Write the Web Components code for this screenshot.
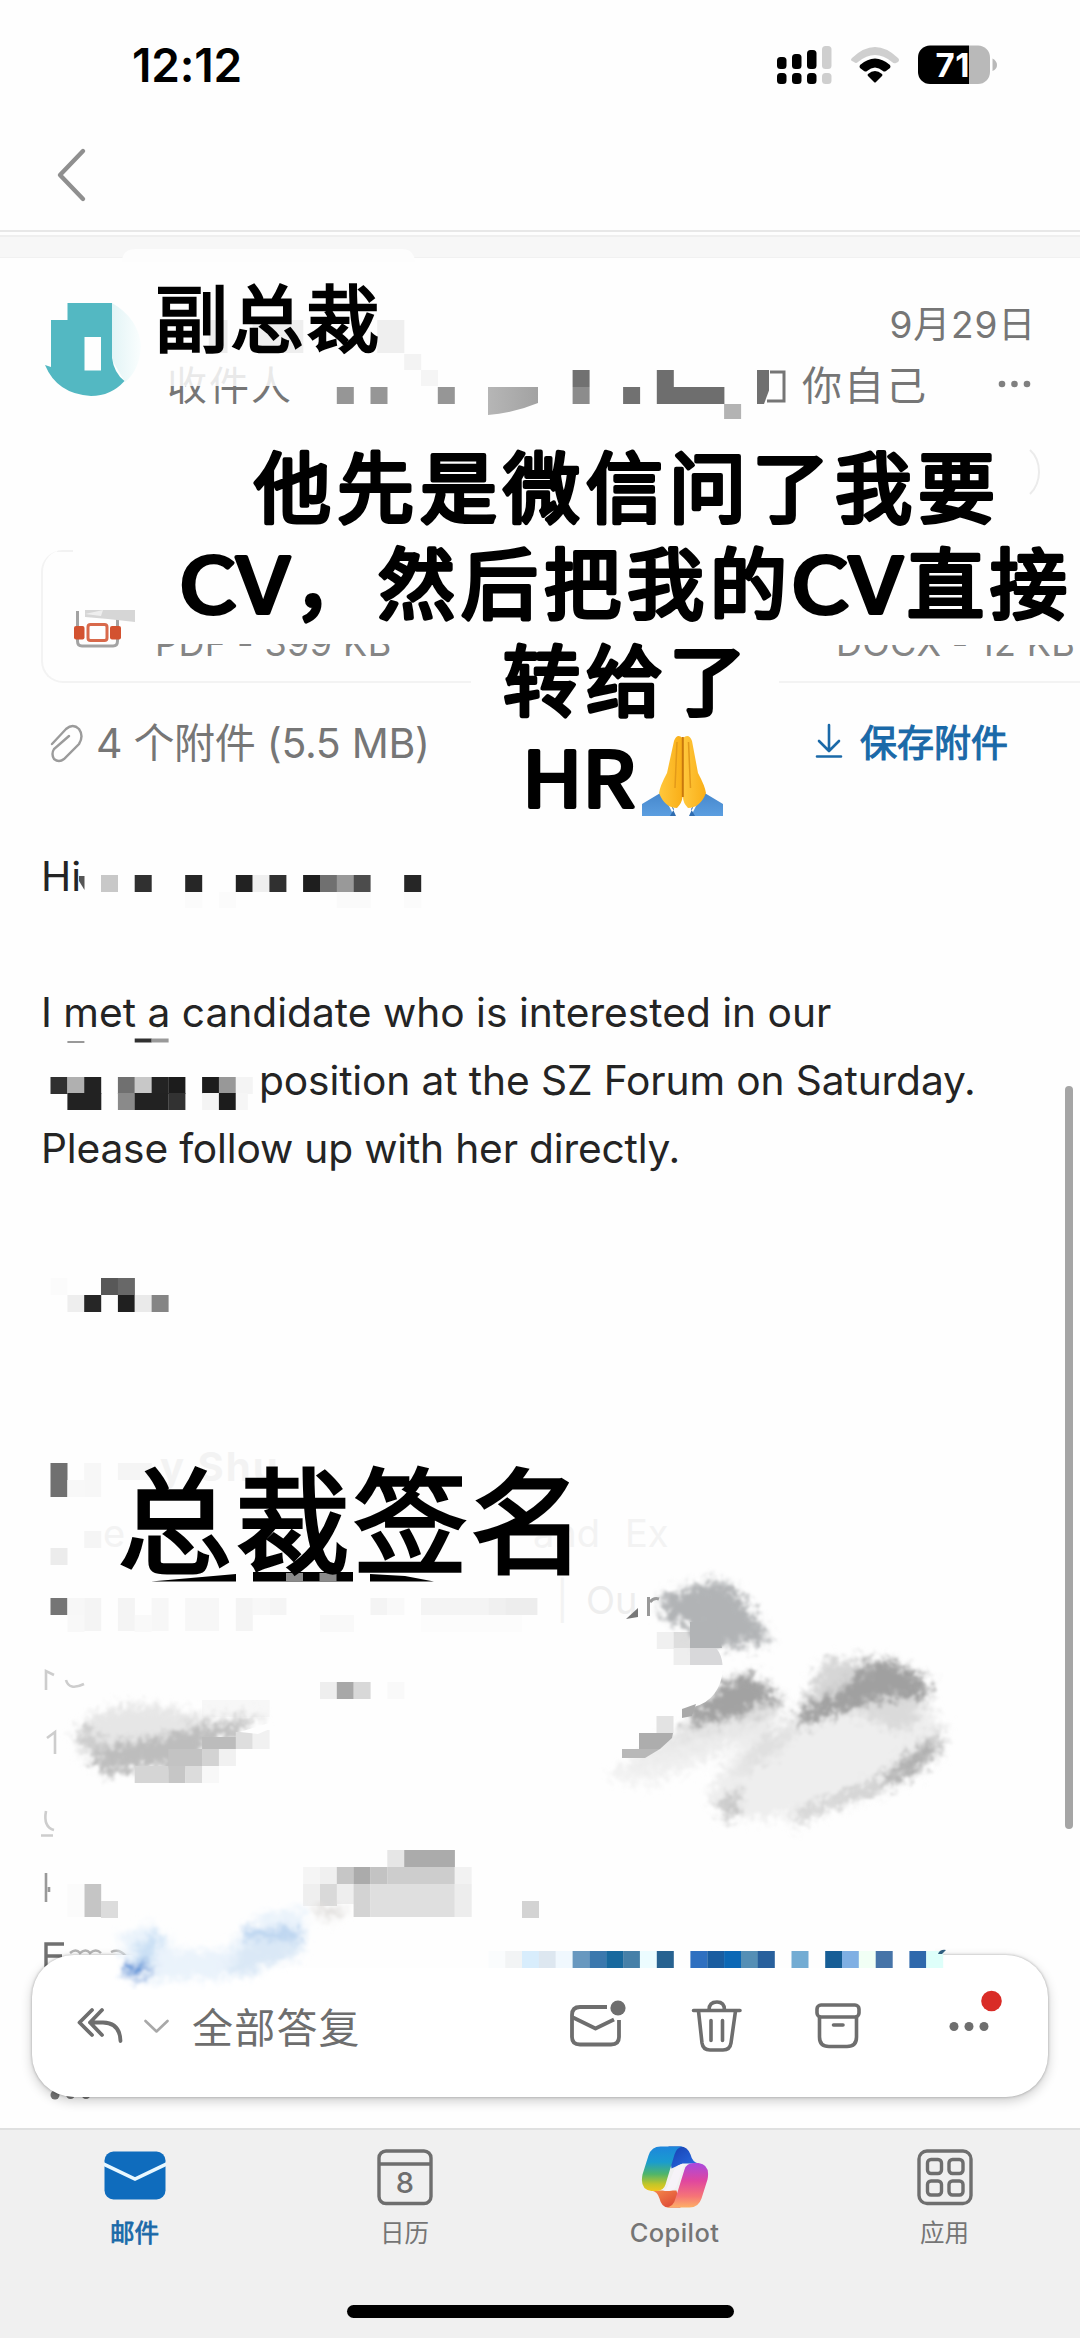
<!DOCTYPE html>
<html lang="zh-CN">
<head>
<meta charset="utf-8">
<title>邮件</title>
<style>
    html, body {
        margin: 0;
        padding: 0;
        background: #fefefe;
    }
</style>
</head>
<body>
<mail-app>
    <status-bar slot="top" time="12:12" battery="71"></status-bar>
    <nav-header slot="top"></nav-header>

    <message-header date="9月29日" to="收件人" self="你自己"></message-header>
    <attachment-strip>
        <attachment-card kind="first" meta="PDF - 399 KB"></attachment-card>
        <attachment-card kind="last" meta="DOCX - 12 KB"></attachment-card>
    </attachment-strip>
    <attachment-summary action="保存附件">4 个附件 (5.5 MB)</attachment-summary>
    <message-body>
        <text-line>Hi</text-line>
        <text-line></text-line>
        <text-line>I met a candidate who is interested in our</text-line>
        <text-line indent="218" spacing="-0.12">position at the SZ Forum on Saturday.</text-line>
        <text-line spacing="-0.18">Please follow up with her directly.</text-line>
    </message-body>

    <redaction-layer slot="over"></redaction-layer>
    <reply-toolbar slot="over" label="全部答复"></reply-toolbar>
    <smudge-strip slot="over"></smudge-strip>
    <sticker-text slot="over"></sticker-text>

    <tab-bar slot="bottom">
        <tab-item icon="mail" label="邮件" active></tab-item>
        <tab-item icon="calendar" label="日历"></tab-item>
        <tab-item icon="copilot" label="Copilot"></tab-item>
        <tab-item icon="apps" label="应用"></tab-item>
    </tab-bar>
</mail-app>

<script>
// Small base class: attaches an open shadow root and fills it from render()
class BaseElement extends HTMLElement {
    constructor() {
        super();
        this.attachShadow({ mode: 'open' });
    }

    connectedCallback() {
        const template = document.createElement('template');
        template.innerHTML = this.render();
        this.shadowRoot.replaceChildren(template.content.cloneNode(true));
    }

    attr(name, fallback = '') {
        return this.getAttribute(name) || fallback;
    }
}

class MailApp extends BaseElement {
    render() {
        return `
            <style>
                :host {
                    position: relative;
                    display: flex;
                    flex-direction: column;
                    width: 1080px;
                    height: 2338px;
                    overflow: hidden;
                    background: #fefefe;
                    color: #242424;
                    font-family: Inter, "Noto Sans CJK SC", sans-serif;
                }
                main {
                    flex: 1;
                    min-height: 0;
                    overflow: hidden;
                }
            </style>
            <slot name="top"></slot>
            <main><slot></slot></main>
            <slot name="bottom"></slot>
            <slot name="over"></slot>
        `;
    }
}
customElements.define('mail-app', MailApp);

class StatusBar extends BaseElement {
    render() {
        return `
            <style>
                :host {
                    display: flex;
                    justify-content: space-between;
                    align-items: center;
                    box-sizing: border-box;
                    height: 130px;
                    padding: 0 82px 1px 132px;
                    color: #000;
                }
                .time {
                    font-size: 46px;
                    font-weight: 600;
                    letter-spacing: -0.2px;
                }
                svg { display: block; }
            </style>
            <span class="time">${this.attr('time')}</span>
            <svg width="222" height="40" viewBox="777 44 222 40">
                <g>
                    <rect x="778" y="56" width="9.5" height="12" rx="3.5"/>
                    <rect x="793" y="53" width="9.5" height="15" rx="3.5"/>
                    <rect x="808" y="49" width="9.5" height="19" rx="3.5"/>
                    <rect x="823" y="45" width="9.5" height="23" rx="3.5" fill="#cfcfcf"/>
                    <rect x="778" y="72" width="9.5" height="11" rx="3.5"/>
                    <rect x="793" y="72" width="9.5" height="11" rx="3.5"/>
                    <rect x="808" y="72" width="9.5" height="11" rx="3.5"/>
                    <rect x="823" y="72" width="9.5" height="11" rx="3.5" fill="#cfcfcf"/>
                </g>
                <path fill="#cfcfcf" d="M853 57 Q876 35 899 57 Q901 59 899 61 L897 62 Q895 63 893 61 Q876 47 859 61 Q857 63 855 61 L853 60 Q851 59 853 57Z"/>
                <path d="M861 64 Q876 51 891 64 Q892 66 891 67 L887 70 Q885 71 884 70 Q876 63 868 70 Q867 71 865 70 L861 67 Q860 66 861 64Z"/>
                <path d="M869 73 Q876 67 883 73 Q884 74 883 75 L877 81 Q876 82 875 81 L869 75 Q868 74 869 73Z"/>
                <clipPath id="shell"><rect x="919" y="44.500" width="72" height="38.500" rx="12"/></clipPath>
                <g clip-path="url(#shell)">
                    <rect x="919" y="44" width="51" height="40"/>
                    <rect x="970" y="44" width="22" height="40" fill="#b9b9b9"/>
                </g>
                <path fill="#b9b9b9" d="M993.500 57.500 Q998 60 998 64 Q998 68 993.500 70Z"/>
                <text x="936.500" y="76" fill="#fff" font-family="Inter, sans-serif" font-size="33" font-weight="700" textLength="34">${this.attr('battery')}</text>
            </svg>
        `;
    }
}
customElements.define('status-bar', StatusBar);

class NavHeader extends BaseElement {
    render() {
        return `
            <style>
                :host { display: block; }
                nav {
                    display: flex;
                    align-items: center;
                    height: 100px;
                    padding-left: 55px;
                    border-bottom: 2px solid #e8e8e8;
                }
                svg { display: block; margin-top: -11px; }
                .band {
                    height: 20px;
                    margin-top: 3px;
                    border-top: 2px solid #efefef;
                    border-bottom: 1px solid #f1f1f1;
                    background: #f7f7f7;
                }
            </style>
            <nav>
                <svg width="34" height="56" viewBox="0 0 34 56" fill="none" stroke="#8f8f8f" stroke-width="4.400" stroke-linecap="round" stroke-linejoin="round">
                    <path d="M28 4 L5 28 L28 52"/>
                </svg>
            </nav>
            <div class="band"></div>
        `;
    }
}
customElements.define('nav-header', NavHeader);

class MessageHeader extends BaseElement {
    render() {
        return `
            <style>
                :host {
                    display: grid;
                    grid-template-columns: 105px 1fr auto 106px;
                    grid-template-rows: 61px 61px;
                    align-items: center;
                    box-sizing: border-box;
                    height: 292px;
                    padding: 33px 44px 137px 20px;
                    align-content: start;
                    color: #767676;
                    font-size: 40px;
                }
                .avatar { grid-row: 1 / 3; margin: -5px 0 0 22px; }
                .date {
                    grid-column: 3 / 5;
                    justify-self: end;
                    font-size: 37px;
                    letter-spacing: 0.8px;
                }
                .to { grid-column: 2; padding-left: 42px; letter-spacing: 2px; }
                .self { letter-spacing: 2px; padding-right: 2px; }
                .more { justify-self: end; display: block; margin-right: 4px; }
            </style>
            <svg class="avatar" width="105" height="100" viewBox="42 300 105 100">
                <defs>
                    <linearGradient id="fade" x1="0" x2="1">
                        <stop offset="0" stop-color="#e3f4f6"/>
                        <stop offset="1" stop-color="#fafefe"/>
                    </linearGradient>
                </defs>
                <path fill="url(#fade)" d="M112 303 Q138 318 141 345 Q140 370 125 382 L112 360Z"/>
                <path fill="#53b8c2" fill-rule="evenodd" d="M67.500 303 H112 V358 Q114 373 124.500 381 Q111 396 91 396 Q57 394 45 365 L51 367 V320 H67.500Z M84.500 337 V370.500 H101 V337Z"/>
            </svg>
            <span class="date">${this.attr('date')}</span>
            <span class="to">${this.attr('to')}</span>
            <span class="self">${this.attr('self')}</span>
            <svg class="more" width="34" height="10" viewBox="0 0 34 10" fill="#808080">
                <circle cx="4" cy="6" r="3.300"/><circle cx="16.500" cy="6" r="3.300"/><circle cx="29" cy="6" r="3.300"/>
            </svg>
        `;
    }
}
customElements.define('message-header', MessageHeader);

class AttachmentStrip extends BaseElement {
    render() {
        return `
            <style>
                :host {
                    display: flex;
                    gap: 308px;
                    height: 133px;
                    padding-left: 41px;
                    overflow: hidden;
                }
            </style>
            <slot></slot>
        `;
    }
}
customElements.define('attachment-strip', AttachmentStrip);

class AttachmentCard extends BaseElement {
    render() {
        const first = this.attr('kind') === 'first';
        return `
            <style>
                :host {
                    flex: none;
                    display: flex;
                    align-items: flex-end;
                    box-sizing: border-box;
                    width: ${first ? 430 : 320}px;
                    height: 133px;
                    border-bottom: 2px solid #f3f3f3;
                    ${first ? 'border-left: 2px solid #f3f3f3; border-radius: 22px 0 0 22px;' : ''}
                    background: linear-gradient(#f2f2f2, #f2f2f2) 14px 0 / ${first ? 16 : 0}px 2px no-repeat;
                    padding: 0 0 18px ${first ? 27 : 57}px;
                    color: #858585;
                    font-size: 36px;
                    line-height: 40px;
                }
                svg { flex: none; margin: 0 17px 13px 0; }
                .meta {
                    white-space: nowrap;
                    clip-path: inset(${first ? '21px' : '22px'} -10px 0 -10px);
                    letter-spacing: ${first ? '0.4px' : '0.3px'};
                }
            </style>
            ${first ? `
            <svg width="68" height="42" viewBox="70 604 68 42" fill="none">
                <path d="M77.500 607 V637 Q77.500 642 82 642 H113 Q117.500 642 117.500 637 V612" stroke="#a3a3a3" stroke-width="3"/>
                <rect x="74" y="622" width="10.500" height="13.500" rx="2" fill="#d35230"/>
                <rect x="110" y="622" width="11" height="13.500" rx="2" fill="#d35230"/>
                <rect x="85" y="617" width="24" height="22" fill="#fefefe"/>
                <rect x="88" y="620.500" width="19" height="16" rx="2.500" stroke="#d8694b" stroke-width="3"/>
                <path d="M85 606 H135 V618 L108 615 L85 613Z" fill="#d6d6d6"/>
                <path d="M85 610 L103 606 L101 612Z" fill="#eee"/>
            </svg>` : ''}
            <span class="meta">${this.attr('meta')}</span>
        `;
    }
}
customElements.define('attachment-card', AttachmentCard);

class AttachmentSummary extends BaseElement {
    render() {
        return `
            <style>
                :host {
                    display: flex;
                    align-items: center;
                    box-sizing: border-box;
                    height: 120px;
                    padding: 0 72px 0 48px;
                    color: #767676;
                    font-size: 41px;
                }
                .count { margin: -6px 0 0 12px; letter-spacing: -0.3px; }
                .save {
                    display: flex;
                    align-items: center;
                    gap: 17px;
                    margin: -4px 0 0 auto;
                    color: #1a69a8;
                    font-size: 37px;
                    -webkit-text-stroke: 1.1px #1a69a8;
                }
            </style>
            <svg width="36" height="42" viewBox="48 721 36 42" fill="none" stroke="#9b9b9b" stroke-width="2.400" stroke-linecap="round">
                <path d="M52 743 L66 728 Q73 722 79 728 Q84 735 79 743 L64 758 Q59 762 54 758 Q51 753 54 748 L69 735"/>
            </svg>
            <span class="count"><slot></slot></span>
            <span class="save">
                <svg width="28" height="36" viewBox="0 0 28 36" fill="none" stroke="#1a69a8" stroke-width="2.600" stroke-linecap="round" stroke-linejoin="round">
                    <path d="M14 2 V27 M4 18 L14 28 L24 18 M2 33.500 H26"/>
                </svg>
                ${this.attr('action')}
            </span>
        `;
    }
}
customElements.define('attachment-summary', AttachmentSummary);

class MessageBody extends BaseElement {
    render() {
        return `
            <style>
                :host {
                    display: flex;
                    flex-direction: column;
                    padding: 40px 42px 0 41px;
                    font-size: 40.7px;
                    color: #242424;
                }
            </style>
            <slot></slot>
        `;
    }
}
customElements.define('message-body', MessageBody);

class TextLine extends BaseElement {
    render() {
        return `
            <style>
                :host {
                    display: block;
                    height: 68px;
                    line-height: 68px;
                    white-space: nowrap;
                    padding-left: ${this.attr('indent', '0')}px;
                    letter-spacing: ${this.attr('spacing', '0')}px;
                }
            </style>
            <slot></slot>
        `;
    }
}
customElements.define('text-line', TextLine);

// Mosaic blocks sit on a 16.84px column grid: [column, y, colour, columns, height]
const CELL = 16.84;
const BLOCKS = [
    [12.4, 320, '#ececec', 1.1, 33], [15, 320, '#eeeeee', 3, 33],
    [22.4, 320, '#efefef', 1.6, 33], [24, 354, '#f3f3f3', 1, 16], [25, 370, '#f5f5f5', 1, 16],
    [20, 387, '#969696'], [22, 387, '#969696'], [26, 387, '#969696'],
    [34, 370, '#717171'], [34, 387, '#8c8c8c'], [37, 387, '#717171'],
    [39, 370, '#6e6e6e'], [39, 387, '#6e6e6e', 4], [43, 404, '#b3b3b3', 1, 15],

    [6, 875, '#c8c8c8'], [8, 875, '#303030'], [11, 875, '#262626'], [14, 875, '#222222'],
    [15, 875, '#efefef'], [16, 875, '#303030'], [18, 875, '#1e1e1e'], [19, 875, '#707070'],
    [20, 875, '#999999'], [21, 875, '#4c4c4c'], [24, 875, '#262626'],
    [11, 892, '#fbfbfb', 1, 16], [13, 892, '#fbfbfb', 1, 16], [20, 892, '#fafafa', 2, 16], [24, 892, '#fbfbfb', 1, 16],

    [4, 1041, '#999999', 1, 2], [8, 1038.5, '#303030', 1, 4], [9, 1038.5, '#999999', 1, 4],
    [3, 1077, '#303030'], [4, 1077, '#b0b0b0'], [5, 1077, '#222222'], [4, 1093, '#222222', 2],
    [7, 1077, '#707070'], [8, 1077, '#c8c8c8'], [9, 1077, '#232323'], [10, 1077, '#1c1c1c'],
    [7, 1093, '#8a8a8a'], [8, 1093, '#222222', 2], [10, 1093, '#323232'],
    [12, 1077, '#1c1c1c'], [13, 1077, '#989898'], [14, 1077, '#f4f4f4'],
    [12, 1093, '#f4f4f4'], [13, 1093, '#1c1c1c'], [14, 1093, '#f6f6f6', 0.7],

    [6, 1278, '#585858'], [7, 1278, '#686868'], [3, 1278, '#fbfbfb'],
    [4, 1295, '#eeeeee'], [5, 1295, '#262626'], [7, 1295, '#202020'], [8, 1295, '#eaeaea'], [9, 1295, '#858585'],

    [3, 1463, '#707070', 1, 34], [5, 1463, '#f7f7f7', 1, 34], [4, 1480, '#f8f8f8'], [7, 1463, '#f5f5f5', 2],
    [5, 1531, '#f5f5f5'], [3, 1548, '#ececec'], [3, 1598, '#757575'],
    [4, 1598, '#f7f7f7'], [4, 1615, '#f8f8f8'], [5, 1598, '#f4f4f4', 1, 33], [7, 1598, '#f4f4f4', 1, 33],
    [8, 1615, '#f9f9f9', 1], [9, 1598, '#f7f7f7', 1, 33],
    [11, 1598, '#f7f7f7', 2, 33], [14, 1598, '#f4f4f4', 1, 33], [15, 1598, '#f8f8f8'], [16, 1598, '#f5f5f5'],
    [19, 1615, '#f9f9f9', 2], [22, 1598, '#f4f4f4'], [23, 1598, '#f9f9f9'],
    [25, 1598, '#f4f4f4', 4], [29, 1598, '#f0f0f0'], [30, 1598, '#ededed', 1.9], [25, 1615, '#fcfcfc', 6],

    [19, 1682, '#eeeeee'], [20, 1682, '#a8a8a8'], [21, 1682, '#d8d8d8'], [23, 1682, '#f9f9f9'],
    [5, 1884, '#c5c5c5', 1, 33], [6, 1901, '#dcdcdc'], [4, 1884, '#fbfbfb', 1, 33],
    [23, 1850, '#e6e6e6'], [24, 1850, '#ababab', 3],
    [18, 1867, '#f5f5f5'], [19, 1867, '#f0f0f0'], [20, 1867, '#c6c6c6'], [21, 1867, '#ababab'],
    [22, 1867, '#c3c3c3'], [23, 1867, '#cdcdcd', 4], [27, 1867, '#f2f2f2'],
    [18, 1884, '#efefef', 1, 22], [19, 1884, '#d9d9d9', 1, 22], [20, 1884, '#eeeeee', 1, 20],
    [21, 1884, '#d3d3d3', 1, 33], [22, 1884, '#dfdfdf', 5, 33], [27, 1884, '#ededed', 1, 33],
    [31, 1901, '#d3d3d3'],

    [39, 1632, '#f0f0f0'], [40, 1632, '#dedede'], [40, 1648, '#eeeeee'],
    [12, 1700, '#f7f7f7', 4]
];

// Stepped lower edge of the first smudge
const STEPS = [
    [12, 1737, '#bcbcbc', 2, 12], [14, 1732, '#dedede', 1, 17], [15, 1730, '#f1f1f1', 1, 19],
    [10, 1749, '#c3c3c3', 2], [12, 1749, '#d3d3d3'], [13, 1749, '#f1f1f1'],
    [8, 1766, '#d5d5d5', 2], [10, 1766, '#c6c6c6'], [11, 1766, '#dcdcdc'], [12, 1766, '#f8f8f8']
];

function drawBlocks(blocks) {
    return blocks.map(([col, y, fill, cols = 1, h = 17]) =>
        `<rect x="${(col * CELL).toFixed(1)}" y="${y}" width="${(cols * CELL + 0.2).toFixed(1)}" height="${h}" fill="${fill}"/>`
    ).join('');
}

class RedactionLayer extends BaseElement {
    render() {
        return `
            <style>
                :host {
                    position: absolute;
                    left: 0;
                    top: 0;
                    width: 1080px;
                    height: 2128px;
                }
                svg { display: block; }
                text { font-family: Inter, "Noto Sans CJK SC", sans-serif; }
            </style>
            <svg width="1080" height="2128" viewBox="0 0 1080 2128">
                <defs>
                    <filter id="rough" x="-10%" y="-20%" width="120%" height="140%">
                        <feGaussianBlur in="SourceGraphic" stdDeviation="4" result="soft"/>
                        <feTurbulence type="fractalNoise" baseFrequency="0.13" numOctaves="3" seed="6" result="noise"/>
                        <feDisplacementMap in="soft" in2="noise" scale="24" xChannelSelector="R" yChannelSelector="G"/>
                        <feGaussianBlur stdDeviation="1"/>
                    </filter>
                    <linearGradient id="haze" x1="0.300" y1="0.200" x2="0.600" y2="1">
                        <stop offset="0" stop-color="#c8c8c8"/>
                        <stop offset="0.400" stop-color="#e8e8e8"/>
                        <stop offset="1" stop-color="#fdfdfd"/>
                    </linearGradient>
                    <linearGradient id="chip" x1="0" x2="1">
                        <stop offset="0" stop-color="#b6b6b6"/>
                        <stop offset="1" stop-color="#a2a2a2"/>
                    </linearGradient>
                </defs>

                <!-- erased parts of the header -->
                <path d="M122 262 Q122 249 136 249 H402 Q414 249 415 262Z" fill="#fdfdfd"/>
                <rect x="155" y="352" width="300" height="34" fill="#fefefe" fill-opacity="0.850"/>
                <path d="M488 387 H538 V403 Q514 413 488 415Z" fill="url(#chip)"/>
                <rect x="757" y="370" width="12" height="34" fill="#707070"/>
                <path d="M764 404 L771 385 V404Z" fill="#fefefe"/>
                <path d="M770 372 H784 V401 H767" fill="none" stroke="#767676" stroke-width="3"/>
                <path d="M1030 450 Q1039 458 1039 472 Q1039 485 1030 494" fill="none" stroke="#ebebeb" stroke-width="2"/>
                <path d="M79 876 H84.500 V890 L79 881Z" fill="#555"/>

                <!-- what is left of the signature text -->
                <g fill="#f3f3f3" font-size="38">
                    <text x="160" y="1481" font-weight="700" font-size="40" letter-spacing="2">y Shu</text>
                    <text x="103" y="1547">e</text>
                    <text x="533" y="1547">and</text>
                    <text x="625" y="1547">Ex</text>
                    <text x="556" y="1614">|</text>
                    <text x="586" y="1614" fill="#eeeeee">Ou</text>
                </g>
                <path d="M648.500 1597 V1616 M650 1602 Q654 1597 659 1599" stroke="#999" stroke-width="3" fill="none"/>
                <path d="M626 1619 L638 1608 V1617Z" fill="#777"/>
                <g fill="none" stroke="#cdcdcd" stroke-width="2.600">
                    <path d="M46 1690 V1671 L54 1675 M66 1680 Q69 1691 84 1684"/>
                    <path d="M47 1738 L55 1732 V1754"/>
                    <path d="M46 1811 Q43 1827 54 1830 M41 1835.500 H53"/>
                    <path d="M46 1873 V1902 M49 1887 V1892" stroke="#999"/>
                </g>
                <path d="M46 1972 V1944 H64 M46 1956 H62" fill="none" stroke="#707070" stroke-width="3.400"/>
                <path d="M70 1953 Q76 1948 80 1953 Q86 1948 90 1953 Q96 1948 101 1953 M111 1952 Q119 1948 126 1956" fill="none" stroke="#b5b5b5" stroke-width="2.400"/>

                ${drawBlocks(BLOCKS)}

                <!-- bottom edge under the signature sticker -->
                <path d="M151 1581.500 L236 1574 V1581.500Z M370 1574 L405 1576 L434 1581.500 H370Z"/>
                <path d="M253 1572 H353 V1581.500 H253Z"/>
                <path d="M286 1573 H303 V1581.500 H286Z M319.500 1573 H336.500 V1581.500 H319.500Z" fill="#8a8a8a"/>

                <!-- brush smudges -->
                <g filter="url(#rough)">
                    <path fill="#e6e6e6" d="M74 1730 Q96 1706 140 1704 Q176 1708 200 1716 L266 1716 L225 1740 L110 1762 L82 1758Z"/>
                    <path fill="#bdbdbd" d="M92 1745 Q150 1740 190 1728 L232 1722 L262 1716 L240 1732 L205 1744 L202 1766 L140 1768 L104 1774 L92 1758Z"/>
                    <path fill="#cbcbcb" d="M76 1728 L90 1726 L104 1748 L92 1758Z"/>
                    <path fill="#b1b3b5" d="M660 1597 L690 1588 L718 1579 L738 1592 L772 1640 L728 1648 L698 1648 L692 1628 L664 1618Z"/>
                    <path fill="url(#haze)" d="M674 1732 L720 1700 L772 1690 L786 1708 L760 1734 L705 1762 L650 1788 L608 1776Z"/>
                    <path fill="#a2a2a2" d="M722 1682 L752 1673 L784 1702 L760 1704 L740 1716 L688 1726 L690 1712Z"/>
                    <path fill="#eeeeee" d="M788 1718 L850 1700 L930 1690 L940 1740 L914 1770 L800 1817 L720 1820 L708 1788 L742 1742Z"/>
                    <path fill="#d6d6d6" d="M796 1714 L824 1660 L890 1658 L850 1698Z"/>
                    <path fill="#a0a0a0" d="M840 1690 L868 1664 L892 1660 L930 1682 L924 1702 L890 1698 L850 1710 L796 1728 L796 1714Z"/>
                    <path fill="#dadada" d="M850 1712 L890 1700 L924 1706 L906 1734 L872 1720Z"/>
                    <path fill="#e0e0e0" d="M760 1736 L800 1724 L780 1752 L730 1780Z"/>
                    <path fill="#cecece" d="M946 1726 L938 1758 L900 1784 L806 1818 L796 1830 L796 1812 L876 1780 L914 1746Z"/>
                    <path fill="#a8a8a8" d="M936 1740 L926 1762 L878 1788 L890 1772Z"/>
                    <path fill="#c4c4c4" d="M714 1806 L742 1788 L740 1802 L732 1818Z"/>
                </g>
                ${drawBlocks(STEPS)}
                <path fill="#fefefe" d="M240 1732 L272 1722 V1728 L258 1734Z"/>
                <path fill="#b1b3b5" d="M690 1622 H716 L722 1648 H690Z"/>
                <path fill="#fefefe" d="M656 1666 H722 V1676 Q716 1704 688 1708 H682 V1716 H656Z"/>
                <path fill="#e3e3e3" d="M656.500 1716 H673.500 V1733 H656.500Z"/>
                <path fill="#a9a9a9" d="M682 1709 L696 1704 L692 1716 L682 1718Z"/>
                <path fill="#adadad" d="M639 1733 H673 L672 1738 L660 1749 H639Z"/>
                <path fill="#b8b8b8" d="M622 1749 H660 L645 1758 H622Z"/>
                <path fill="#d8d8da" d="M690 1648 H716 Q722 1655 722.500 1665 H690Z"/>

                <g fill="#777"><circle cx="55" cy="2095" r="4.500"/><circle cx="70.500" cy="2094.500" r="4.500"/><circle cx="86" cy="2094.500" r="4.500"/></g>

                <rect x="1065" y="1086" width="8" height="743" rx="4" fill="#a5a5a5"/>
            </svg>
        `;
    }
}
customElements.define('redaction-layer', RedactionLayer);

class ReplyToolbar extends BaseElement {
    render() {
        return `
            <style>
                :host {
                    position: absolute;
                    left: 32px;
                    top: 1955px;
                    width: 1016px;
                    height: 142px;
                    box-sizing: border-box;
                    display: flex;
                    align-items: center;
                    padding: 0 44px 0 45px;
                    border-radius: 42px;
                    background: #fff;
                    box-shadow: 0 0 3px rgba(0, 0, 0, 0.3), 0 4px 12px rgba(0, 0, 0, 0.2);
                    color: #6e6e6e;
                    font-size: 41px;
                }
                svg { display: block; flex: none; }
                .arrow { margin-left: 19px; }
                .label { margin: -3px 0 0 23px; letter-spacing: 1.2px; }
                .actions {
                    display: flex;
                    align-items: center;
                    margin-left: auto;
                }
                .trash { margin-left: 64px; }
                .archive { margin-left: 71px; }
                .more { margin-left: 86px; }
            </style>
            <svg width="48" height="40" viewBox="78 2006 48 40" fill="none" stroke="#6e6e6e" stroke-width="3.800" stroke-linecap="round" stroke-linejoin="round">
                <path d="M93 2010 L80.500 2022.500 L93 2035 M103 2010 L91 2022.500 L103 2035 M91 2022.500 H104 Q121 2023 121.500 2041"/>
            </svg>
            <svg class="arrow" width="25" height="15" viewBox="0 0 25 15" fill="none" stroke="#a8a8a8" stroke-width="2.600" stroke-linecap="round" stroke-linejoin="round">
                <path d="M1.500 2 L12.500 12.500 L23.500 2"/>
            </svg>
            <span class="label">${this.attr('label')}</span>
            <div class="actions">
                <svg width="58" height="56" viewBox="569 1998 58 56" fill="none" stroke="#6e6e6e" stroke-width="3.800" stroke-linecap="butt" stroke-linejoin="round">
                    <path d="M607 2007 H580 Q572 2007 572 2015 V2037 Q572 2044.500 580 2044.500 H611 Q619 2044.500 619 2037 V2020"/>
                    <path d="M572 2017 L595.500 2028.500 L614 2019.500"/>
                    <circle cx="618" cy="2008" r="7.600" fill="#6e6e6e" stroke="none"/>
                </svg>
                <svg class="trash" width="52" height="56" viewBox="691 1997 52 56" fill="none" stroke="#6e6e6e" stroke-width="3.600" stroke-linecap="round" stroke-linejoin="round">
                    <path d="M693.500 2009.500 H740 M709 2009 Q709 2001 717 2001 Q724.500 2001 724.500 2009"/>
                    <path d="M698.500 2010 L702 2042 Q703 2049 710 2049 H723 Q730 2049 731 2042 L735.500 2010 M711 2019.500 V2039.500 M722.500 2019.500 V2039.500"/>
                </svg>
                <svg class="archive" width="48" height="52" viewBox="814 2000 48 52" fill="none" stroke="#6e6e6e" stroke-width="3.600" stroke-linecap="round" stroke-linejoin="round">
                    <rect x="817" y="2005" width="42" height="12" rx="4"/>
                    <path d="M819.500 2017 V2037 Q819.500 2046.500 829 2046.500 H847 Q856.500 2046.500 856.500 2037 V2017 M833.500 2025 H843"/>
                </svg>
                <svg class="more" width="56" height="72" viewBox="948 1990 56 72">
                    <g fill="#6e6e6e"><circle cx="954" cy="2026.500" r="4.500"/><circle cx="969" cy="2026.500" r="4.500"/><circle cx="984" cy="2026.500" r="4.500"/></g>
                    <circle cx="991.500" cy="2001" r="10.300" fill="#d92c27"/>
                </svg>
            </div>
        `;
    }
}
customElements.define('reply-toolbar', ReplyToolbar);

// Blue mosaic and smear that run across the top edge of the toolbar
const BLUES = [
    [29, '#fafcfd'], [30, '#f2f4f5'], [31, '#d8edfc'], [32, '#dde7f0'], [33, '#f0f8fe'], [34, '#6898bf'], [35, '#3b78ad'],
    [36, '#18699e'], [37, '#4680a8'], [38, '#ecfcff'], [39, '#276290'], [41, '#2f70c0'], [42, '#1a5da0'],
    [43, '#0c68b5'], [44, '#558fb5'], [45, '#28609c'], [47, '#73acd3'], [49, '#175e96'], [50, '#7fafe3'],
    [51, '#f1fff5'], [52, '#4674a8'], [54, '#2f69ac'], [55, '#defffa']
];

class SmudgeStrip extends BaseElement {
    render() {
        return `
            <style>
                :host {
                    position: absolute;
                    left: 0;
                    top: 1900px;
                    width: 1080px;
                    height: 90px;
                }
                svg { display: block; }
            </style>
            <svg width="1080" height="90" viewBox="0 1900 1080 90">
                <defs>
                    <filter id="soft" x="-20%" y="-20%" width="140%" height="140%">
                        <feGaussianBlur in="SourceGraphic" stdDeviation="4.500" result="wash"/>
                        <feTurbulence type="fractalNoise" baseFrequency="0.1" numOctaves="3" seed="3" result="noise"/>
                        <feDisplacementMap in="wash" in2="noise" scale="18" xChannelSelector="R" yChannelSelector="G"/>
                        <feGaussianBlur stdDeviation="1"/>
                    </filter>
                </defs>
                <rect x="145" y="1945" width="790" height="23" fill="#fefefe"/>
                <g filter="url(#soft)">
                    <path fill="#eaf3fb" d="M118 1938 L150 1922 L175 1950 L225 1950 L262 1914 L306 1908 L302 1954 L235 1978 L130 1982Z"/>
                    <path fill="#c9dff4" d="M132 1955 L148 1936 L164 1932 L150 1965 L136 1975Z"/>
                    <path fill="#dae8f6" d="M222 1972 L250 1942 L300 1932 L298 1954 L245 1976Z"/>
                    <path fill="#a8c9ec" d="M244 1930 H302 V1938 H244Z"/>
                    <path fill="#2f80d2" d="M122 1972 L134 1964 L154 1966 L140 1979Z"/>
                    <path fill="#e0dedc" d="M308 1906 L350 1908 L330 1922Z"/>
                </g>
                ${drawBlocks(BLUES.map(([col, fill]) => [col, 1951, fill]))}
                <path d="M938 1954 Q940 1949 946 1950 L942 1954Z" fill="#315f80"/>
            </svg>
        `;
    }
}
customElements.define('smudge-strip', SmudgeStrip);

class StickerText extends BaseElement {
    render() {
        return `
            <style>
                :host {
                    position: absolute;
                    left: 0;
                    top: 260px;
                    width: 1080px;
                    height: 1340px;
                }
                svg { display: block; }
                text {
                    font-family: "Noto Sans CJK SC", sans-serif;
                    fill: #000;
                    stroke: #000;
                }
                .title { font-size: 73px; stroke-width: 2.6px; letter-spacing: 2.6px; }
                .sign { font-size: 114px; stroke-width: 3.4px; letter-spacing: 3.6px; }
                .note {
                    font-size: 77px;
                    stroke-width: 4.2px;
                    stroke-linejoin: round;
                    letter-spacing: 6px;
                }
                .wide { letter-spacing: 0; }
            </style>
            <svg width="1080" height="1340" viewBox="0 260 1080 1340">
                <defs>
                    <linearGradient id="palm" x1="0" x2="1">
                        <stop offset="0" stop-color="#ffc83d"/>
                        <stop offset="1" stop-color="#f9ae17"/>
                    </linearGradient>
                    <linearGradient id="sleeve" x1="0" y1="0" x2="0" y2="1">
                        <stop offset="0" stop-color="#4687cc"/>
                        <stop offset="1" stop-color="#5b9ee0"/>
                    </linearGradient>
                </defs>
                <text class="title" x="155" y="346">副总裁</text>
                <text class="note" x="254" y="517">他先是微信问了我要</text>
                <text class="note wide" x="179" y="613" textLength="110" lengthAdjust="spacingAndGlyphs">CV</text>
                <text class="note" x="294" y="613">，</text>
                <text class="note" x="378" y="613">然后把我的</text>
                <text class="note wide" x="791" y="613" textLength="111" lengthAdjust="spacingAndGlyphs">CV</text>
                <text class="note" x="907" y="613">直接</text>
                <text class="note" x="503" y="710">转给了</text>
                <text class="note wide" x="522" y="807" textLength="113" lengthAdjust="spacingAndGlyphs">HR</text>
                <g role="img" aria-label="folded hands">
                    <path fill="url(#sleeve)" d="M642 804 L662 792 L674 816 H642Z M723 804 L703 792 L691 816 H723Z"/>
                    <path fill="#2f6cb0" d="M662 793 L674 809 L670 816 H676 L664 790Z M703 793 L691 809 L695 816 H689 L701 790Z"/>
                    <path fill="url(#palm)" d="M682.500 738 Q677 733 674 741 L667 773 Q660 786 659 793 Q665 808 677 808 Q682 803 682.500 797Z"/>
                    <path fill="url(#palm)" d="M683 738 Q689 733 692 741 L698 773 Q705 786 706 793 Q700 808 688 808 Q683 803 683 797Z"/>
                    <path fill="none" stroke="#c9780d" stroke-width="2" d="M682.800 737 V797"/>
                    <path fill="none" stroke="#e39a1a" stroke-width="1.500" d="M677 742 L675 788 M688.500 742 L690.500 788"/>
                </g>
                <text class="sign" x="118" y="1564">总裁签名</text>
            </svg>
        `;
    }
}
customElements.define('sticker-text', StickerText);

const TAB_ICONS = {
    mail: `
        <svg width="62" height="62" viewBox="103.500 2145.500 62 62">
            <rect x="104" y="2151" width="61" height="48" rx="9" fill="#0f6cbd"/>
            <path d="M102 2163 L134.500 2178.500 L167 2163" fill="none" stroke="#e8f8ff" stroke-width="3.600"/>
        </svg>`,
    calendar: `
        <svg width="62" height="62" viewBox="373.500 2145.500 62 62" fill="none" stroke="#6e6e6e" stroke-width="3.400">
            <rect x="378.500" y="2150.500" width="52" height="52.500" rx="7"/>
            <path d="M378.500 2163.500 H430.500"/>
            <text x="404.500" y="2192" text-anchor="middle" font-family="Inter, sans-serif" font-size="29" font-weight="500" fill="#6e6e6e" stroke="none">8</text>
        </svg>`,
    copilot: `
        <svg width="70" height="62" viewBox="639.500 2145.500 70 62">
            <defs>
                <linearGradient id="a" x1="0" y1="0" x2="0" y2="1">
                    <stop offset="0" stop-color="#1d86dc"/>
                    <stop offset="0.350" stop-color="#1a9ccf"/>
                    <stop offset="0.620" stop-color="#4fb56a"/>
                    <stop offset="0.850" stop-color="#c3c628"/>
                    <stop offset="1" stop-color="#f0c71e"/>
                </linearGradient>
                <linearGradient id="b" x1="0" y1="0" x2="0" y2="1">
                    <stop offset="0" stop-color="#a84ade"/>
                    <stop offset="0.400" stop-color="#e0469f"/>
                    <stop offset="0.750" stop-color="#f67576"/>
                    <stop offset="1" stop-color="#fdb066"/>
                </linearGradient>
                <linearGradient id="c" x1="0" y1="0" x2="1" y2="1">
                    <stop offset="0" stop-color="#163fae"/>
                    <stop offset="1" stop-color="#2a6fe8"/>
                </linearGradient>
                <linearGradient id="d" x1="0" y1="0" x2="1" y2="1">
                    <stop offset="0" stop-color="#f58a4a"/>
                    <stop offset="1" stop-color="#da3f34"/>
                </linearGradient>
            </defs>
            <path fill="url(#c)" d="M668 2146 H680 Q687 2146 690 2154 Q692 2162 698 2163 H682 L671 2168Z"/>
            <path fill="url(#d)" d="M651 2190 H676 L680 2207 H668 Q661 2207 659 2198 Q657 2191 651 2190Z"/>
            <path fill="url(#a)" d="M660 2146 H682 Q676 2147 674 2154 L665 2184 Q663 2190.500 656 2190.500 H651 Q639 2189 642 2174 L648 2155 Q651 2146 660 2146Z"/>
            <path fill="url(#b)" d="M689 2207 H666 Q673 2206 675 2198 L684 2169 Q686 2162.500 693 2162.500 H698 Q710 2164 707 2179 L701 2198 Q698 2207 689 2207Z"/>
            <path fill="#f6f3f8" d="M683 2163.500 Q676 2163.500 673.500 2170 L667 2186 Q665 2190 662 2190.500 H669 Q675 2190 677 2183 L682 2168 Q683 2164 686 2163.500Z"/>
        </svg>`,
    apps: `
        <svg width="62" height="62" viewBox="913.500 2145.500 62 62" fill="none" stroke="#6e6e6e" stroke-width="3.400">
            <rect x="918.500" y="2150.500" width="52" height="52.500" rx="8"/>
            <rect x="927" y="2159" width="14" height="14" rx="3.500"/>
            <rect x="948.500" y="2159" width="14" height="14" rx="3.500"/>
            <rect x="927" y="2180.500" width="14" height="14" rx="3.500"/>
            <rect x="948.500" y="2180.500" width="14" height="14" rx="3.500"/>
        </svg>`
};

class TabItem extends BaseElement {
    render() {
        const active = this.hasAttribute('active');
        return `
            <style>
                :host {
                    flex: 1;
                    display: flex;
                    flex-direction: column;
                    align-items: center;
                    gap: 8px;
                    color: ${active ? '#1a69a8' : '#757575'};
                    font-size: 24.5px;
                    line-height: 34px;
                    ${active ? '-webkit-text-stroke: 0.8px #1a69a8;' : ''}
                }
                svg { display: block; }
                .latin { font-size: 25.5px; letter-spacing: 0.4px; font-weight: 500; }
            </style>
            ${TAB_ICONS[this.attr('icon')]}
            <span class="${/^[a-z]/i.test(this.attr('label')) ? 'latin' : ''}">${this.attr('label')}</span>
        `;
    }
}
customElements.define('tab-item', TabItem);

class TabBar extends BaseElement {
    render() {
        return `
            <style>
                :host {
                    flex: none;
                    display: flex;
                    flex-direction: column;
                    justify-content: space-between;
                    align-items: center;
                    box-sizing: border-box;
                    height: 210px;
                    border-top: 2px solid #dfe0e0;
                    padding: 15.5px 0 20px;
                    background: #f0f0f0;
                }
                .tabs { display: flex; width: 1080px; margin-left: -1px; }
                .home {
                    width: 387px;
                    height: 13px;
                    border-radius: 7px;
                    background: #000;
                }
            </style>
            <div class="tabs"><slot></slot></div>
            <div class="home"></div>
        `;
    }
}
customElements.define('tab-bar', TabBar);
</script>
</body>
</html>
